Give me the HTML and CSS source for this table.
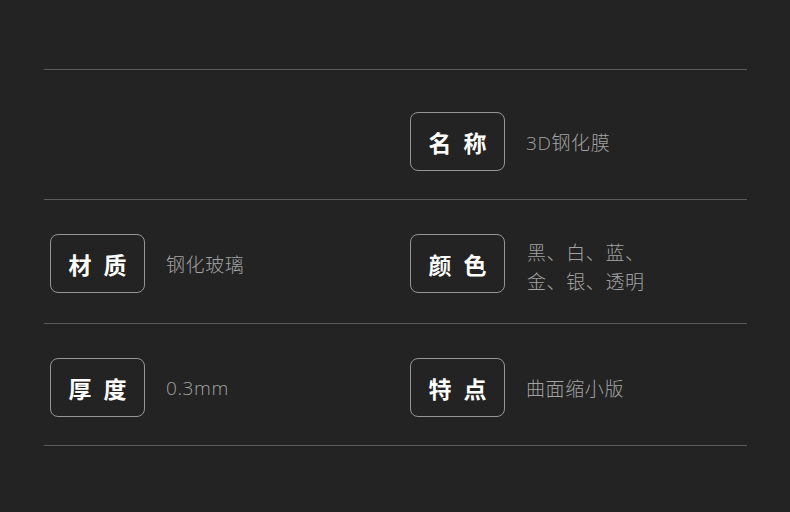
FILE: index.html
```html
<!DOCTYPE html>
<html lang="zh-CN">
<head>
  <meta charset="UTF-8">
  <meta name="viewport" content="width=device-width, initial-scale=1.0">
  <title>产品参数</title>
  <link rel="stylesheet" href="styles.css">
</head>
<body>
  <section class="specs">
    <div class="row row-first">
      <div class="cell"></div>
      <div class="cell">
        <span class="tag">名称</span>
        <span class="value">3D钢化膜</span>
      </div>
    </div>
    <div class="row">
      <div class="cell">
        <span class="tag">材质</span>
        <span class="value">钢化玻璃</span>
      </div>
      <div class="cell">
        <span class="tag">颜色</span>
        <span class="value multi">黑、白、蓝、<br>金、银、透明</span>
      </div>
    </div>
    <div class="row row-last">
      <div class="cell">
        <span class="tag">厚度</span>
        <span class="value">0.3mm</span>
      </div>
      <div class="cell">
        <span class="tag">特点</span>
        <span class="value">曲面缩小版</span>
      </div>
    </div>
  </section>
</body>
</html>
```

FILE: styles.css
```css
/* styles.css */

body {
  margin: 0;
  padding: 0;
  background-color: #232323;
  font-family: "Noto Sans CJK SC", "Noto Sans", sans-serif;
  height: 512px;
  overflow: hidden;
}

.specs {
  margin: 69px 0 0 44px;
  width: 703px;
  border-bottom: 1px solid #5a5a5a;
}

.row {
  display: grid;
  grid-template-columns: 366px 1fr;
  border-top: 1px solid #5a5a5a;
  padding: 34px 0 30px;
}

.row-first {
  padding: 42px 0 28px;
}

.row-last {
  padding: 34px 0 28px;
}

.cell {
  display: flex;
  align-items: center;
  height: 59px;
}

.row .cell:first-child {
  padding-left: 6px;
}

.tag {
  box-sizing: border-box;
  width: 95px;
  height: 59px;
  border: 1px solid #959595;
  border-radius: 8px;
  display: flex;
  align-items: center;
  justify-content: center;
  padding-left: 12px;
  color: #fff;
  font-size: 23px;
  font-weight: bold;
  letter-spacing: 12px;
}

.value {
  margin-left: 21px;
  color: #a2a2a2;
  font-family: "Open Sans", "Noto Sans CJK SC", sans-serif;
  font-size: 19px;
  font-weight: 300;
  letter-spacing: 0.6px;
}

.value.multi {
  margin-left: 22px;
  line-height: 29px;
  margin-top: 4px;
  margin-bottom: -4px;
}
```
